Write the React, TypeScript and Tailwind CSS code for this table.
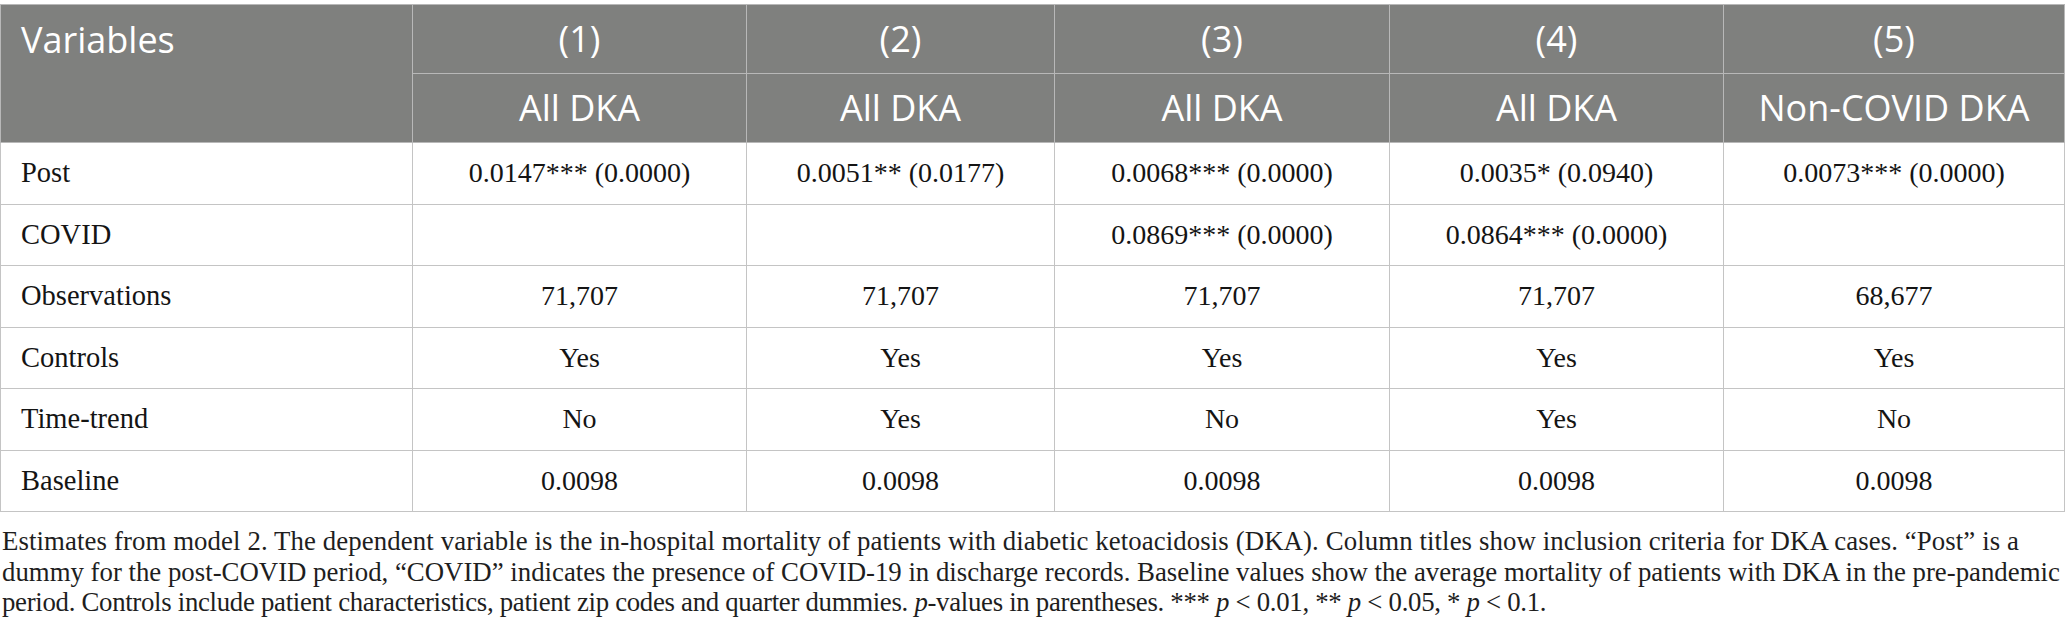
import React from "react";

const cols = [412, 334, 308, 335, 334, 341];

const headCell =
  "border border-[#b8b8b8] text-center align-middle font-normal text-white text-[36px] leading-[40px]";
const bodyCell =
  "border border-[#c4c4c4] text-center align-middle text-[28px] leading-[32px] text-[#141414] h-[61.5px]";
const firstCell =
  "border border-[#c4c4c4] text-left align-middle text-[28.5px] leading-[32px] text-[#141414] pl-[20px] h-[61.5px]";

const rows: { label: string; vals: string[] }[] = [
  {
    label: "Post",
    vals: [
      "0.0147*** (0.0000)",
      "0.0051** (0.0177)",
      "0.0068*** (0.0000)",
      "0.0035* (0.0940)",
      "0.0073*** (0.0000)",
    ],
  },
  { label: "COVID", vals: ["", "", "0.0869*** (0.0000)", "0.0864*** (0.0000)", ""] },
  { label: "Observations", vals: ["71,707", "71,707", "71,707", "71,707", "68,677"] },
  { label: "Controls", vals: ["Yes", "Yes", "Yes", "Yes", "Yes"] },
  { label: "Time-trend", vals: ["No", "Yes", "No", "Yes", "No"] },
  { label: "Baseline", vals: ["0.0098", "0.0098", "0.0098", "0.0098", "0.0098"] },
];

export default function App() {
  return (
    <div className="bg-white w-[2067px] h-[640px] overflow-hidden pt-[4px]">
      <table
        className="table-fixed border-collapse w-[2064px]"
        style={{ fontFamily: "'Liberation Serif', 'Times New Roman', serif" }}
      >
        <colgroup>
          {cols.map((w, i) => (
            <col key={i} style={{ width: w }} />
          ))}
        </colgroup>
        <thead className="bg-[#7f807e]" style={{ fontFamily: "'Open Sans', 'Noto Sans', sans-serif" }}>
          <tr className="h-[69px]">
            <th rowSpan={2} className={headCell + " text-left align-top pl-[20px] pt-[15px]"}>
              Variables
            </th>
            <th className={headCell}>(1)</th>
            <th className={headCell}>(2)</th>
            <th className={headCell}>(3)</th>
            <th className={headCell}>(4)</th>
            <th className={headCell}>(5)</th>
          </tr>
          <tr className="h-[69px]">
            <th className={headCell}>All DKA</th>
            <th className={headCell}>All DKA</th>
            <th className={headCell}>All DKA</th>
            <th className={headCell}>All DKA</th>
            <th className={headCell}>Non-COVID DKA</th>
          </tr>
        </thead>
        <tbody>
          {rows.map((r) => (
            <tr key={r.label}>
              <td className={firstCell}>{r.label}</td>
              {r.vals.map((v, i) => (
                <td key={i} className={bodyCell}>
                  {v}
                </td>
              ))}
            </tr>
          ))}
        </tbody>
      </table>
      <div
        className="mt-[14px] pl-[2px] text-[26.8px] leading-[30.5px] text-[#1e1e1e] whitespace-nowrap"
        style={{ fontFamily: "'Liberation Serif', 'Times New Roman', serif" }}
      >
        <div className="tracking-[0.1px]">
          Estimates from model 2. The dependent variable is the in-hospital mortality of patients with diabetic
          ketoacidosis (DKA). Column titles show inclusion criteria for DKA cases. “Post” is a
        </div>
        <div>
          dummy for the post-COVID period, “COVID” indicates the presence of COVID-19 in discharge records. Baseline
          values show the average mortality of patients with DKA in the pre-pandemic
        </div>
        <div className="tracking-[-0.3px]">
          period. Controls include patient characteristics, patient zip codes and quarter dummies. <i>p</i>-values in
          parentheses. *** <i>p</i> &lt; 0.01, ** <i>p</i> &lt; 0.05, * <i>p</i> &lt; 0.1.
        </div>
      </div>
    </div>
  );
}
